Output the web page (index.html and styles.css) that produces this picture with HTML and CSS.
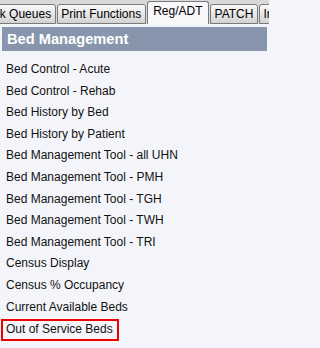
FILE: index.html
```html
<!DOCTYPE html>
<html>
<head>
<meta charset="utf-8">
<link rel="stylesheet" href="styles.css">
</head>
<body>
<div class="tabbar">
  <div class="tab first">Work Queues</div>
  <div class="tab">Print Functions</div>
  <div class="tab selected">Reg/ADT</div>
  <div class="tab">PATCH</div>
  <div class="tab">Inpatient</div>
</div>
<div class="panel">
  <div class="header">Bed Management</div>
  <ul class="menu">
    <li>Bed Control - Acute</li>
    <li>Bed Control - Rehab</li>
    <li>Bed History by Bed</li>
    <li>Bed History by Patient</li>
    <li>Bed Management Tool - all UHN</li>
    <li>Bed Management Tool - PMH</li>
    <li>Bed Management Tool - TGH</li>
    <li>Bed Management Tool - TWH</li>
    <li>Bed Management Tool - TRI</li>
    <li>Census Display</li>
    <li>Census % Occupancy</li>
    <li>Current Available Beds</li>
    <li><span class="highlight">Out of Service Beds</span></li>
  </ul>
</div>
</body>
</html>
```
FILE: styles.css
```css
html {
  background: #f4f5fa;
}
html, body {
  margin: 0;
  padding: 0;
}
body {
  width: 269px;
  height: 348px;
  overflow: hidden;
  background: #f4f5fa;
  font-family: "Liberation Sans", Arial, sans-serif;
  font-size: 12px;
  color: #111;
}
.tabbar {
  width: 269px;
  height: 24px;
  background: #d9d9d9;
  display: flex;
  align-items: flex-start;
  gap: 1px;
  overflow: hidden;
  white-space: nowrap;
}
.tab {
  flex: none;
  box-sizing: border-box;
  margin-top: 4px;
  height: 20px;
  padding: 1px 3.5px 0;
  line-height: 17px;
  border: 1px solid #7a7a7a;
  border-radius: 3px 3px 0 0;
  background: linear-gradient(#fafafa, #d2d2d2);
  color: #000;
}
.tab.first {
  margin-left: -26.5px;
}
.tab.selected {
  margin-top: 1px;
  height: 23px;
  padding: 1px 5.5px 0;
  border-bottom: none;
  background: #f8f8fb;
}
.panel {
  width: 269px;
  box-sizing: border-box;
  padding: 3px 2px 0;
}
.header {
  height: 24px;
  line-height: 24px;
  background: #8796ad;
  color: #fff;
  font-weight: bold;
  font-size: 14.67px;
  padding-left: 5px;
}
.menu {
  list-style: none;
  margin: 0;
  padding: 8px 0 0 4px;
}
.menu li {
  height: 21.6px;
  line-height: 21.6px;
  white-space: nowrap;
}
.highlight {
  display: inline-block;
  vertical-align: -1px;
  line-height: 16px;
  padding: 0 4px 2px 3px;
  margin-left: -5px;
  border: 2px solid #ee0000;
}
```
